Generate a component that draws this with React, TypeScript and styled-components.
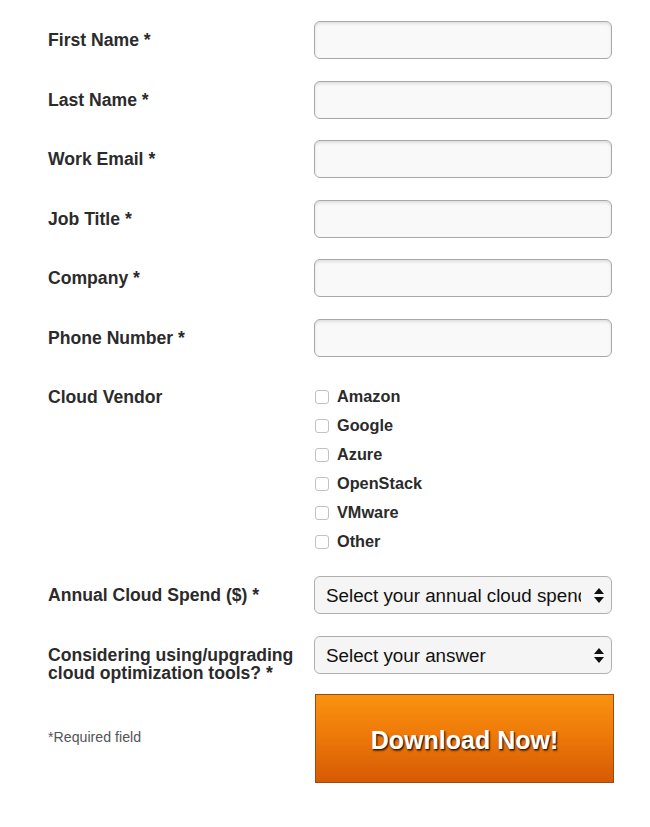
import React from "react";
import styled, { createGlobalStyle } from "styled-components";

const Global = createGlobalStyle`
  html, body { margin: 0; padding: 0; background: #fff; }
  body { font-family: "Liberation Sans", Arial, Helvetica, sans-serif; color: #333; }
`;

const Page = styled.form`
  display: flex;
  flex-direction: column;
  padding: 21px 0 0 48px;
  width: 565px;
`;

const Row = styled.div<{ $gap?: number }>`
  display: grid;
  grid-template-columns: 266px 298px;
  align-items: start;
  margin-bottom: ${(p) => (p.$gap ?? 21.5)}px;
`;

const Label = styled.label`
  font-size: 17.6px;
  font-weight: 700;
  line-height: 18px;
  color: #2b2b2b;
  padding-top: 10px;
  padding-right: 10px;
`;

const TextInput = styled.input`
  box-sizing: border-box;
  width: 298px;
  height: 38px;
  border: 1px solid #a8a8a8;
  border-radius: 6px;
  background: #f9f9f9;
  box-shadow: inset 0 2px 3px rgba(0, 0, 0, 0.1);
  outline: none;
  margin: 0;
`;

const CheckList = styled.div`
  display: flex;
  flex-direction: column;
  padding-top: 4px;
`;

const CheckItem = styled.label`
  display: flex;
  align-items: center;
  height: 29px;
  font-size: 16.3px;
  font-weight: 700;
  color: #2b2b2b;
`;

const Box = styled.span`
  box-sizing: border-box;
  width: 14px;
  height: 14px;
  border: 1px solid #c2c2c2;
  border-radius: 3px;
  background: #fff;
  margin: 0 8px 0 1px;
`;

const SelectWrap = styled.div`
  position: relative;
  width: 298px;
  height: 38px;
`;

const Select = styled.select`
  appearance: none;
  -webkit-appearance: none;
  box-sizing: border-box;
  width: 298px;
  height: 38px;
  border: 1px solid #b0b0b0;
  border-radius: 6px;
  background: #f5f5f5;
  font-family: "Liberation Sans", Arial, Helvetica, sans-serif;
  font-size: 18.8px;
  color: #111;
  padding: 0 30px 0 11px;
  margin: 0;
  outline: none;
`;

const Arrows = styled.svg`
  position: absolute;
  right: 8px;
  top: 12px;
  pointer-events: none;
`;

const BottomRow = styled.div`
  display: grid;
  grid-template-columns: 266px 299px;
  align-items: center;
  margin-top: 1px;
`;

const Note = styled.div`
  font-size: 14.2px;
  color: #555;
  padding-bottom: 4px;
`;

const Button = styled.button`
  box-sizing: border-box;
  width: 299px;
  height: 89px;
  margin-left: 1px;
  border: 1px solid #9a4a14;
  background: linear-gradient(to bottom, #fa9210 0%, #ee7a08 45%, #d65a04 100%);
  color: #fff;
  font-family: "Liberation Sans", Arial, Helvetica, sans-serif;
  font-weight: 700;
  font-size: 25px;
  text-shadow: 1px 1px 1px #3a1800, 1px 2px 2px rgba(60, 25, 0, 0.7);
  padding: 4px 0 0;
  cursor: pointer;
`;

const fields = ["First Name *", "Last Name *", "Work Email *", "Job Title *", "Company *", "Phone Number *"];
const vendors = ["Amazon", "Google", "Azure", "OpenStack", "VMware", "Other"];

function SelectBox({ text }: { text: string }) {
  return (
    <SelectWrap>
      <Select defaultValue="">
        <option value="">{text}</option>
      </Select>
      <Arrows width="10" height="15" viewBox="0 0 10 15">
        <path d="M5 0 L10 6 L0 6 Z" fill="#111" />
        <path d="M0 9 L10 9 L5 15 Z" fill="#111" />
      </Arrows>
    </SelectWrap>
  );
}

export default function App() {
  return (
    <>
      <Global />
      <Page>
        {fields.map((f) => (
          <Row key={f}>
            <Label>{f}</Label>
            <TextInput type="text" />
          </Row>
        ))}
        <Row $gap={20}>
          <Label>Cloud Vendor</Label>
          <CheckList>
            {vendors.map((v) => (
              <CheckItem key={v}>
                <Box />
                {v}
              </CheckItem>
            ))}
          </CheckList>
        </Row>
        <Row $gap={22}>
          <Label>Annual Cloud Spend ($) *</Label>
          <SelectBox text="Select your annual cloud spend" />
        </Row>
        <Row $gap={11}>
          <Label>Considering using/upgrading cloud optimization tools? *</Label>
          <SelectBox text="Select your answer" />
        </Row>
        <BottomRow>
          <Note>*Required field</Note>
          <Button type="button">Download Now!</Button>
        </BottomRow>
      </Page>
    </>
  );
}
